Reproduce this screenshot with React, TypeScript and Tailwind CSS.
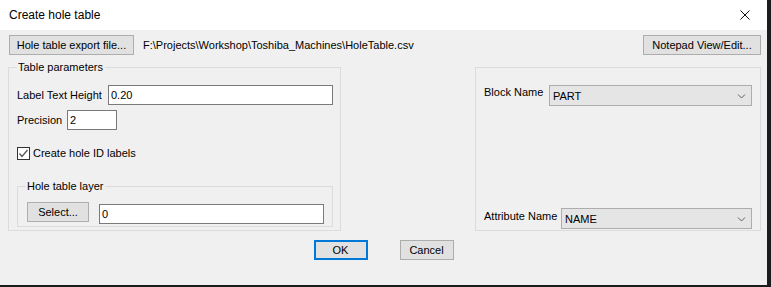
import React from "react";

const font = { fontFamily: '"Liberation Sans", Arial, sans-serif' };

function WinButton({ label, className = "" }: { label: string; className?: string }) {
  return (
    <button
      className={`flex h-[20px] items-center justify-center border border-[#adadad] bg-[#e1e1e1] px-[6px] text-[11px] leading-none text-black ${className}`}
    >
      {label}
    </button>
  );
}

function TextBox({ value, className = "" }: { value: string; className?: string }) {
  return (
    <div
      className={`flex h-[20px] items-center border border-[#7a7a7a] bg-white pl-[2px] text-[11px] leading-none text-black ${className}`}
    >
      {value}
    </div>
  );
}

function Combo({ value, className = "" }: { value: string; className?: string }) {
  return (
    <div
      className={`flex h-[21px] items-center justify-between border border-[#adadad] bg-[#e5e5e5] pl-[3px] pr-[5px] text-[11px] leading-none text-black ${className}`}
    >
      <span className="pt-[2px]">{value}</span>
      <svg width="9" height="6" viewBox="0 0 9 6">
        <path d="M1 1.5 L4.5 5 L8 1.5" fill="none" stroke="#606060" strokeWidth="1" />
      </svg>
    </div>
  );
}

function GroupBox({
  legend,
  className = "",
  children,
}: {
  legend?: string;
  className?: string;
  children: React.ReactNode;
}) {
  return (
    <div className={`relative border border-[#dcdcdc] ${className}`}>
      {legend && (
        <span className="absolute left-[8px] top-[-7px] bg-[#f0f0f0] pl-[1px] pr-[2px] text-[11px] leading-[13px] text-black">
          {legend}
        </span>
      )}
      {children}
    </div>
  );
}

export default function App() {
  return (
    <div className="h-[287px] w-[771px] bg-[#1b1c1e]" style={font}>
      <div className="flex h-[285px] w-[767px] flex-col bg-[#f0f0f0]">
        {/* title bar */}
        <div className="flex h-[30px] items-center justify-between bg-white pl-[9px] pr-[17px]">
          <span className="text-[12px] text-black">Create hole table</span>
          <svg width="10" height="10" viewBox="0 0 10 10">
            <path d="M0.5 0.5 L9.5 9.5 M9.5 0.5 L0.5 9.5" stroke="#111" strokeWidth="1" />
          </svg>
        </div>

        {/* export row */}
        <div className="mt-[5px] flex items-center pl-[9px] pr-[6px]">
          <WinButton label="Hole table export file..." className="w-[125px]" />
          <span className="ml-[9px] text-[11px] text-black">
            F:\Projects\Workshop\Toshiba_Machines\HoleTable.csv
          </span>
          <WinButton label="Notepad View/Edit..." className="ml-auto w-[118px]" />
        </div>

        {/* groups */}
        <div className="mt-[12px] flex justify-between pl-[8px] pr-[6px]">
          <GroupBox legend="Table parameters" className="h-[164px] w-[333px] pl-[8px] pr-[7px]">
            <div className="mt-[17px] flex items-center">
              <span className="w-[91px] text-[11px] text-black">Label Text Height</span>
              <TextBox value="0.20" className="flex-1" />
            </div>
            <div className="mt-[5px] flex items-center">
              <span className="w-[50px] text-[11px] text-black">Precision</span>
              <TextBox value="2" className="w-[50px]" />
            </div>
            <div className="mt-[17px] flex h-[13px] items-center">
              <div className="flex h-[13px] w-[13px] items-center justify-center border border-[#333] bg-white">
                <svg width="11" height="11" viewBox="0 0 11 11">
                  <path d="M1.5 5.5 L4 8.5 L9.5 2" fill="none" stroke="#555" strokeWidth="1.3" />
                </svg>
              </div>
              <span className="ml-[3px] text-[11px] leading-[13px] text-black">Create hole ID labels</span>
            </div>
            <GroupBox legend="Hole table layer" className="mt-[26px] h-[41px] pl-[9px] pr-[8px]">
              <div className="mt-[15px] flex items-start">
                <WinButton label="Select..." className="w-[62px]" />
                <TextBox value="0" className="ml-[10px] mt-[2px] flex-1" />
              </div>
            </GroupBox>
          </GroupBox>

          <GroupBox className="flex h-[164px] w-[286px] flex-col pl-[8px] pr-[8px]">
            <div className="mt-[17px] flex items-start">
              <span className="w-[65px] text-[11px] leading-[14px] text-black">Block Name</span>
              <Combo value="PART" className="flex-1" />
            </div>
            <div className="mt-auto mb-[1px] flex items-start">
              <span className="w-[77px] pt-[1px] text-[11px] leading-[14px] text-black">Attribute Name</span>
              <Combo value="NAME" className="flex-1" />
            </div>
          </GroupBox>
        </div>

        {/* OK / Cancel */}
        <div className="mt-[9px] flex justify-center gap-[32px]">
          <button className="flex h-[20px] w-[54px] items-center justify-center border-2 border-[#0078d7] bg-[#e1e1e1] text-[11px] leading-none text-black">
            OK
          </button>
          <WinButton label="Cancel" className="w-[54px]" />
        </div>
      </div>
    </div>
  );
}
